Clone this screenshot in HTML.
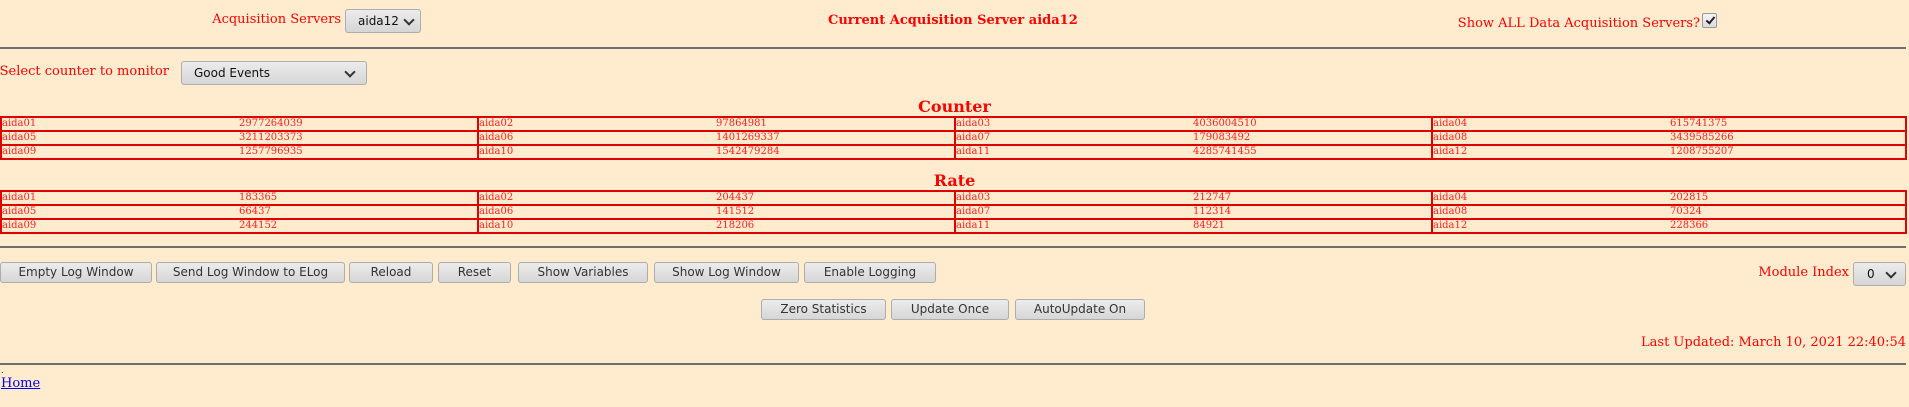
<!DOCTYPE html>
<html><head><meta charset="utf-8"><style>
html,body{margin:0;padding:0;width:1909px;height:407px;overflow:hidden;background:#ffebcd;}
body{position:relative;font-family:"DejaVu Serif","Liberation Serif",serif;color:#f00;}
.a{position:absolute;white-space:nowrap;}
.t13{font-size:13px;}
.hr{position:absolute;left:0;width:1906px;height:0;border-top:2px solid #6e6e6e;}
.btn{position:absolute;height:21px;box-sizing:border-box;border:1px solid #adadad;border-radius:3px;background:linear-gradient(#ececec,#d6d6d6);font-family:"DejaVu Sans","Liberation Sans",sans-serif;font-size:12px;color:#333;text-align:center;line-height:19px;}
.sel{position:absolute;box-sizing:border-box;border:1px solid #adadad;border-radius:3px;background:linear-gradient(#ececec,#d6d6d6);font-family:"DejaVu Sans","Liberation Sans",sans-serif;font-size:12px;color:#111;}
.chev{position:absolute;width:6px;height:6px;border-right:2px solid #333;border-bottom:2px solid #333;transform:rotate(45deg);}
.row{position:absolute;height:14px;box-sizing:border-box;border:2px solid #e00000;border-bottom:none;font-size:10px;line-height:12px;color:#f22;}
.row.last{height:16px;border-bottom:2px solid #e00000;}
.row span{position:absolute;top:0;}
h3{position:absolute;margin:0;font-size:16px;font-weight:bold;width:1909px;text-align:center;}
</style></head><body>
<div class="a t13" style="right:1568px;top:12px;">Acquisition Servers</div>
<div class="sel" style="left:345px;top:9px;width:76px;height:24px;"><span class="a" style="left:12px;top:4px;">aida12</span><span class="chev" style="left:59px;top:6px;"></span></div>
<div class="a t13" style="left:828px;top:13px;font-weight:bold;">Current Acquisition Server aida12</div>
<div class="a t13" style="right:209px;top:16px;">Show ALL Data Acquisition Servers?</div>
<div class="a" style="left:1702px;top:13px;width:15px;height:15px;box-sizing:border-box;border:1px solid #999;border-radius:2px;background:linear-gradient(#f4f4f4,#dcdcdc);"><span class="a" style="left:5px;top:1px;width:3px;height:7px;border-right:2.5px solid #222;border-bottom:2.5px solid #222;transform:rotate(40deg);"></span></div>
<div class="hr" style="top:47px;"></div>
<div class="a t13" style="right:1740px;top:64px;">Select counter to monitor</div>
<div class="sel" style="left:181px;top:61px;width:186px;height:24px;"><span class="a" style="left:12px;top:4px;">Good Events</span><span class="chev" style="left:164px;top:6px;"></span></div>
<h3 style="top:97px;">Counter</h3>
<h3 style="top:171px;">Rate</h3>
<div id="t"></div>
<div class="hr" style="top:246px;"></div>
<div class="btn" style="left:0;top:262px;width:152px;">Empty Log Window</div>
<div class="btn" style="left:156px;top:262px;width:189px;">Send Log Window to ELog</div>
<div class="btn" style="left:349px;top:262px;width:84px;">Reload</div>
<div class="btn" style="left:438px;top:262px;width:73px;">Reset</div>
<div class="btn" style="left:518px;top:262px;width:130px;">Show Variables</div>
<div class="btn" style="left:654px;top:262px;width:145px;">Show Log Window</div>
<div class="btn" style="left:804px;top:262px;width:132px;">Enable Logging</div>
<div class="a t13" style="right:60px;top:265px;">Module Index</div>
<div class="sel" style="left:1853px;top:262px;width:53px;height:24px;"><span class="a" style="left:13px;top:4px;">0</span><span class="chev" style="left:33px;top:6px;"></span></div>
<div class="btn" style="left:761px;top:299px;width:125px;">Zero Statistics</div>
<div class="btn" style="left:891px;top:299px;width:118px;">Update Once</div>
<div class="btn" style="left:1015px;top:299px;width:130px;">AutoUpdate On</div>
<div class="a t13" style="right:3px;top:335px;">Last Updated: March 10, 2021 22:40:54</div>
<div class="hr" style="top:363px;"></div>
<div class="a" style="left:1px;top:366px;font-size:8px;color:#000;">.</div>
<a class="a t13" style="left:1px;top:376px;color:#00e;text-decoration:underline;">Home</a>
<script>
var c=[["aida01","2977264039","aida02","97864981","aida03","4036004510","aida04","615741375"],["aida05","3211203373","aida06","1401269337","aida07","179083492","aida08","3439585266"],["aida09","1257796935","aida10","1542479284","aida11","4285741455","aida12","1208755207"]];
var r=[["aida01","183365","aida02","204437","aida03","212747","aida04","202815"],["aida05","66437","aida06","141512","aida07","112314","aida08","70324"],["aida09","244152","aida10","218206","aida11","84921","aida12","228366"]];
var h="";
function t(d,top){for(var i=0;i<3;i++){for(var g=0;g<4;g++){var x=g*477;var w=(g==3)?1907-x:479;h+='<div class="row'+(i==2?' last':'')+'" style="left:'+x+'px;top:'+(top+i*14)+'px;width:'+w+'px;"><span style="left:0">'+d[i][g*2]+'</span><span style="left:237px">'+d[i][g*2+1]+'</span></div>';}}}
t(c,116);t(r,190);
document.getElementById("t").innerHTML=h;
</script>
</body></html>
